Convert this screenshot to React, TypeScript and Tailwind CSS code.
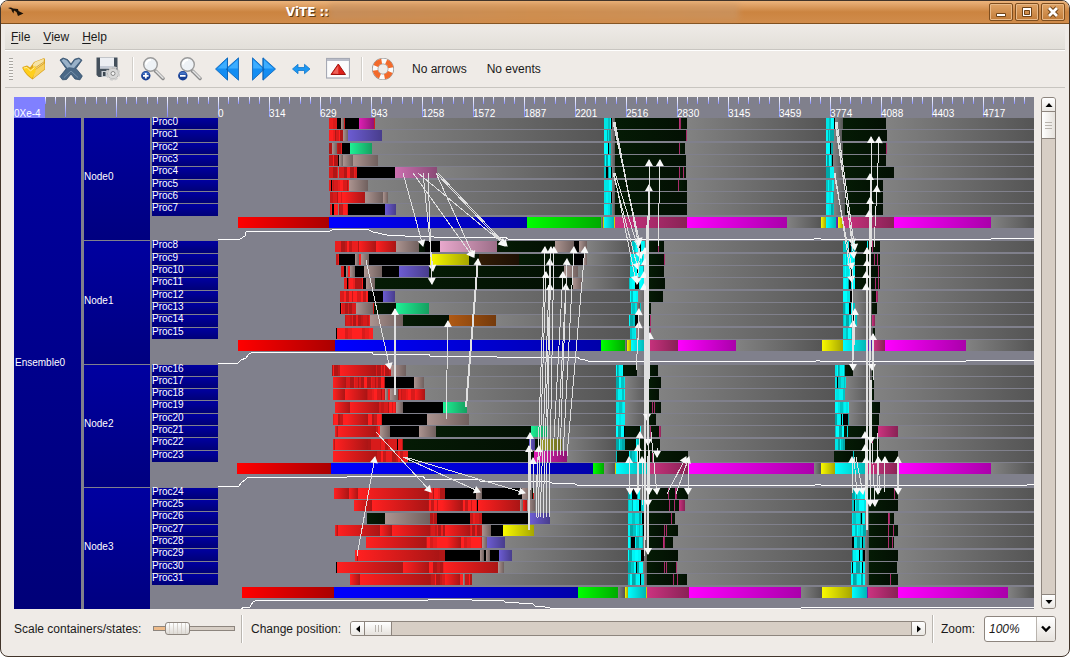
import React from "react";

// Each track is a list of "<x><state>" tokens, a state lasts until the next token.
// "_" is idle; lower case r / c are dense runs of short states.
const NODES = [
  {
    name: "Node0",
    tracks: [
      "329r 337K 341T 344R 345K 359M 374R 375_ 604c 611K 612_ 615D 679V 681D 687_ 826c 834K 835_ 843D 886_",
      "329r 343T 348S 382_ 604c 611_ 615D 686V 687_ 826c 834_ 842D 887_",
      "329r 332T 337r 342K 350G 372_ 604c 608K 609c 611_ 615D 679V 680D 685_ 826c 830K 831c 833_ 843D 886V 887_",
      "329r 338K 339T 343T 353T 378_ 604c 611_ 615D 686_ 826c 832K 833_ 843D 886_",
      "329r 338T 339r 357K 395P 437_ 604c 606K 608c 611K 612_ 615D 679V 680D 683V 684D 686_ 826c 834_ 843D 894_",
      "329r 331K 332r 349T 368_ 604c 612_ 615D 678V 679D 687_ 826c 834_ 845D 883_",
      "330r 344R 365T 383T 388_ 604c 611K 612_ 615D 687_ 826c 834_ 845D 883_",
      "330r 332K 334r 338T 339r 348K 385S 396_ 604c 612_ 615D 687_ 826c 834_ 845D 883_",
    ],
    summary: "238A 329B 527N 601_ 603Y 604C 614Y 615V 687F 787_ 821Y 826C 836U 838Y 843V 894F 991_",
    curve:
      "218,239 240,239 245,236 246,232 249,231 330,231 334,229 367,229 373,232 387,235 405,236 433,236 434,237 505,237 508,239 814,239 815,238 820,238 821,239 991,239 992,238 1030,238 1034,239",
  },
  {
    name: "Node1",
    tracks: [
      "335r 359R 376R 396T 419D 425K 440Q 497D 555T 574K 579T 587_ 632c 639K 641c 645_ 649D 658V 659D 664_ 843c 849K 851c 855D 867c 868D 872V 873D 880_",
      "336r 339K 355T 359r 361T 369K 430Y 469D 479W 519D 573K 584T 587_ 630c 646_ 649D 664V 665_ 843c 855D 874V 875D 877V 878D 880_",
      "341r 344K 346T 348r 350T 355K 364T 382K 399S 429D 564T 578_ 630c 637K 638c 646_ 649D 664_ 843c 850K 852c 855D 878V 879D 880_",
      "344r 347K 348r 363K 366T 375D 573T 582_ 629c 635K 639c 645_ 649D 665_ 843c 849K 851c 855D 875V 876D 878V 879D 880_",
      "340r 368K 383S 395_ 630c 638_ 649D 663_ 843c 850K 853_ 872D 876V 878_",
      "340K 341r 356T 373R 374D 396G 429_ 631c 637_ 640c 641_ 649D 651_ 843c 849K 851c 855_ 872D 877_",
      "345r 370T 403D 449O 496_ 629c 635K 638_ 649D 650V 651_ 843c 852K 854c 857_ 872V 875_",
      "336K 337r 373_ 630c 636_ 650V 651_ 843c 853_ 873D 875_",
    ],
    summary: "238A 335B 601N 625_ 627Y 631C 645_ 647V 678F 736_ 822Y 843C 867U 873V 885F 966_",
    curve:
      "218,363 238,363 241,360 246,358 249,354 253,352 372,352 373,354 429,354 430,356 496,356 497,357 577,357 580,359 585,360 588,361 816,361 817,360 819,360 820,361 966,361 967,360 1031,360 1034,361",
  },
  {
    name: "Node2",
    tracks: [
      "332r 340R 376r 391T 406_ 616c 623D 637_ 649D 658_ 835c 845D 853_ 872D 874_",
      "333R 346r 385K 414T 424_ 616c 625_ 649D 661_ 835c 837K 838c 846_ 872D 874_",
      "333R 345R 367r 385T 388r 390T 398r 415R 425_ 616c 625_ 649D 659_ 835c 845_ 872D 874_",
      "335R 350R 379r 396T 403K 443G 467_ 616c 625_ 649D 652V 653D 654V 655D 661_ 835c 849_ 872D 880_",
      "333r 347R 368r 382K 427T 469_ 616c 625_ 649D 656_ 835c 841K 842c 843K 848c 849_ 872D 879_",
      "335R 338R 376r 380T 390K 419T 436D 531G 547_ 616c 624K 625D 640c 641_ 650V 651D 659V 661_ 835c 844D 847c 848D 878V 898_",
      "333R 335R 368r 397K 398r 403D 529S 535D 541L 562_ 616c 625D 636c 639D 660_ 835c 845D 872V 873D 879_",
      "333R 377r 408D 534M 567_ 616c 617D 629c 637D 652V 653D 688_ 834D 853c 854D 898_",
    ],
    summary: "237A 331B 593N 604_ 615Y 616C 647V 689F 814_ 821Y 835C 867V 899F 991_",
    curve:
      "218,486 239,486 241,483 245,480 248,477 347,477 348,476 423,476 425,479 478,479 480,481 547,481 552,483 575,484 577,485 815,485 816,484 820,484 821,485 1027,485 1028,484 1030,484 1034,485",
  },
  {
    name: "Node3",
    tracks: [
      "334R 349R 358R 429r 445K 476T 482K 522T 532D 533R 534_ 628c 632K 637c 640_ 647D 668V 669D 675V 677D 688_ 852c 867_ 868D 894V 895D 898_",
      "354R 372R 428r 442R 462r 477K 478R 520T 523R 527T 535_ 628c 639K 641c 645_ 647D 669V 670D 674V 675D 679V 685_ 852c 854K 855c 866_ 869D 898_",
      "367D 385T 430r 437K 470r 482K 530S 550_ 628c 642K 644_ 647D 671V 672D 675_ 852c 861K 862c 865_ 869D 888V 890D 894_",
      "335R 338R 380R 392R 430r 445R 470r 482T 491K 503Y 534_ 628c 643K 645_ 647D 664V 665D 666V 667D 678_ 852c 866_ 869D 888V 889D 893V 894D 898_",
      "366R 426r 447R 461r 482T 487S 505_ 628c 631K 635c 643_ 647D 663V 665D 673_ 852K 854c 862K 863c 865_ 869D 888V 889D 892V 893D 894_",
      "355r 358R 439r 445K 480T 484K 486T 490K 499S 512_ 628c 641K 644_ 647D 678_ 852c 859K 860c 863K 865_ 869D 898_",
      "336K 337R 403R 429r 444R 498T 504_ 628c 636K 637c 643_ 647D 664V 665D 666V 667D 676V 677_ 851c 852K 853c 862K 863c 865_ 869D 897_",
      "350R 360R 430r 445R 460r 463T 465r 472_ 628c 640K 641c 644_ 647D 673V 674D 677V 678D 687_ 851c 865_ 869D 890V 891D 898_",
    ],
    summary: "242A 334B 578N 618_ 625Y 628C 646Y 647V 689F 801_ 822Y 852C 867U 868V 898F 1008_",
    curve:
      "241,609 244,607 250,607 253,602 257,600 428,600 429,599 471,599 472,600 503,600 505,602 533,604 535,606 540,606 550,608 801,608 802,607 1030,607 1034,608",
  },
];

const STATES: Record<string, [string, string]> = {
  _: ["#828282", "#555555"],
  A: ["#ff0000", "#aa0000"],
  B: ["#0000ff", "#0000aa"],
  N: ["#00ff00", "#00aa00"],
  Y: ["#fafa00", "#a6a600"],
  C: ["#00ffff", "#00b4b4"],
  F: ["#ff00ff", "#aa00aa"],
  V: ["#cc3380", "#882255"],
  U: ["#6a30c0", "#5020a0"],
  R: ["#ff2020", "#aa1515"],
  K: ["#000000", "#000000"],
  T: ["#ac9490", "#70605e"],
  M: ["#de20b4", "#901575"],
  S: ["#6c5cd2", "#483d8c"],
  G: ["#1ff095", "#159f60"],
  P: ["#cc70b0", "#8a4a76"],
  Q: ["#e8a8cc", "#9c6e88"],
  D: ["#051b05", "#031003"],
  O: ["#b05a14", "#743a0c"],
  W: ["#321c06", "#1e1004"],
  L: ["#9c9c30", "#6c6c20"],
};

const DENSE: Record<string, string[]> = {
  r: ["#ff2020", "#d81b1b", "#b01616", "#ea1e1e", "#c41919"],
  c: ["#00ffff", "#00e4e4", "#00a8a8", "#00f4f4", "#00c4c4"],
};

// from x, from y, to x, to y, stroke width
const ARROWS = [
  [403, 173, 423, 246, 1], [413, 173, 473, 257, 1], [418, 173, 505, 245, 1],
  [423, 173, 433, 271, 1], [428, 173, 432, 284, 1], [436, 173, 474, 257, 1],
  [436, 173, 505, 246, 1], [438, 173, 507, 246, 1],
  [366, 260, 390, 369, 1], [395, 395, 395, 309, 2], [446, 420, 448, 321, 1],
  [466, 407, 478, 259, 2], [357, 556, 375, 457, 1],
  [536, 518, 545, 247, 1], [538, 518, 546, 272, 1], [540, 518, 550, 259, 1],
  [543, 518, 550, 284, 1], [546, 518, 551, 247, 1], [549, 518, 554, 247, 1],
  [553, 456, 563, 272, 1], [557, 456, 566, 284, 1], [560, 456, 567, 259, 1],
  [563, 456, 574, 247, 1], [567, 456, 585, 247, 1],
  [529, 530, 529, 446, 2], [530, 490, 530, 433, 1], [533, 493, 533, 458, 1], [536, 490, 539, 446, 1],
  [376, 432, 431, 492, 1], [403, 457, 480, 492, 1], [405, 457, 525, 493, 1],
  [613, 122, 640, 244, 1], [615, 122, 641, 258, 1], [614, 122, 639, 246, 1],
  [613, 173, 638, 269, 1], [614, 173, 636, 282, 1], [615, 173, 641, 258, 1],
  [645, 540, 645, 248, 2], [645, 500, 645, 259, 1], [644, 556, 644, 272, 1], [646, 500, 644, 284, 1],
  [649, 380, 650, 333, 1], [648, 247, 649, 185, 2], [649, 220, 649, 160, 1], [658, 247, 660, 160, 1],
  [636, 370, 639, 322, 1], [638, 340, 639, 309, 1], [640, 250, 637, 284, 1],
  [647, 225, 647, 420, 3], [648, 300, 648, 445, 2], [648, 456, 648, 554, 2], [648, 440, 648, 506, 1],
  [638, 493, 640, 432, 1], [637, 493, 638, 445, 1], [630, 493, 629, 457, 1], [643, 505, 642, 457, 1],
  [629, 458, 630, 494, 1], [638, 450, 637, 494, 1], [649, 450, 649, 494, 1], [651, 432, 657, 494, 1],
  [657, 448, 657, 457, 1], [688, 458, 688, 494, 1], [667, 494, 686, 457, 1], [676, 494, 689, 457, 1],
  [835, 122, 853, 245, 1], [836, 122, 854, 258, 1], [837, 122, 855, 250, 1],
  [834, 173, 852, 269, 1], [835, 173, 852, 282, 1],
  [871, 247, 871, 137, 1], [877, 190, 879, 137, 1], [870, 247, 870, 174, 1], [874, 247, 877, 186, 1],
  [870, 360, 870, 198, 2], [869, 480, 869, 211, 1], [867, 530, 867, 248, 2], [867, 500, 867, 260, 1],
  [866, 400, 866, 272, 1], [866, 400, 866, 284, 1], [854, 346, 855, 309, 1], [853, 360, 853, 321, 1],
  [852, 270, 853, 370, 1], [872, 340, 872, 370, 1], [871, 380, 871, 443, 2], [873, 380, 873, 334, 1],
  [866, 500, 865, 432, 1], [866, 500, 865, 445, 1], [866, 493, 866, 457, 1], [853, 493, 852, 457, 1],
  [854, 457, 857, 494, 1], [856, 457, 863, 494, 1], [877, 432, 878, 494, 1], [880, 493, 878, 457, 1],
  [884, 493, 885, 457, 1], [897, 490, 898, 457, 1], [898, 458, 898, 494, 1],
  [870, 443, 870, 506, 1], [872, 443, 875, 506, 1],
];

const RULER = [
  "", "", "", "", "0", "314", "629", "943", "1258", "1572",
  "1887", "2201", "2516", "2830", "3145", "3459", "3774", "4088", "4403", "4717",
];

const TOP = 118;
const END = 1034;
const rowTop = (row: number) => Math.round(TOP + row * 12.33);

function Track({ states, row }: { states: string; row: number }) {
  const tokens = states.split(" ").map((t) => ({ x: parseInt(t, 10), key: t[t.length - 1] }));
  const y = rowTop(row);
  const h = 11;

  return (
    <g>
      {tokens.map(({ x, key }, i) => {
        const next = tokens[i + 1]?.x ?? END;
        const shades = DENSE[key];
        if (!shades) {
          return <rect key={x} x={x} y={y} width={next - x} height={h} fill={`url(#state${key})`} />;
        }
        const slices = [];
        let at = x;
        while (at < next) {
          const n = (at * 37 + row * 53 + at * at) % 17;
          const w = Math.min(key === "c" ? 1 + (n % 3) : 1 + (n % 4), next - at);
          slices.push(<rect key={at} x={at} y={y} width={w} height={h} fill={shades[n % shades.length]} />);
          at += w;
        }
        return <g key={x}>{slices}</g>;
      })}
    </g>
  );
}

function Arrow({ points }: { points: number[] }) {
  const [x1, y1, x2, y2, width] = points;
  const angle = (Math.atan2(y2 - y1, x2 - x1) * 180) / Math.PI;
  return (
    <g>
      <line x1={x1} y1={y1} x2={x2} y2={y2} stroke="#e0e0e0" strokeWidth={width} shapeRendering="crispEdges" />
      <path d="M1 0L-6 -4V4Z" fill="#f8f8f8" transform={`translate(${x2} ${y2}) rotate(${angle})`} />
    </g>
  );
}

function Timeline() {
  return (
    <svg
      className="h-[493px] min-w-0 flex-1"
      viewBox="218 118 816 493"
      preserveAspectRatio="none"
      role="img"
      aria-label="Trace timeline"
    >
      <defs>
        {Object.entries(STATES).map(([key, [from, to]]) => (
          <linearGradient key={key} id={`state${key}`}>
            <stop offset="0" stopColor={from} />
            <stop offset="1" stopColor={to} />
          </linearGradient>
        ))}
      </defs>
      <g shapeRendering="crispEdges">
        {NODES.map((node, n) => (
          <g key={node.name}>
            {node.tracks.map((states, i) => (
              <Track key={i} states={states} row={n * 10 + i} />
            ))}
            <Track states={node.summary} row={n * 10 + 8} />
            <polyline points={node.curve} fill="none" stroke="#fff" strokeWidth="1" />
          </g>
        ))}
      </g>
      {ARROWS.map((points, i) => (
        <Arrow key={i} points={points} />
      ))}
    </svg>
  );
}

function Ruler() {
  return (
    <div className="grid h-[21px] shrink-0 grid-cols-20">
      {RULER.map((label, i) => (
        <div key={i} className="grid">
          <div className="flex [grid-area:1/1]">
            {[0, 1, 2, 3, 4].map((tick) => (
              <div key={tick} className="flex-1">
                <div
                  className={
                    tick === 0
                      ? "h-5 w-px bg-linear-to-b from-white to-[#8080ff]"
                      : "h-[7px] w-px bg-linear-to-b from-white to-[#8080ff]"
                  }
                />
              </div>
            ))}
          </div>
          {i === 0 ? (
            <span className="flex w-[31px] items-end bg-[#8080ff] leading-[8px] [grid-area:1/1]">0Xe-4</span>
          ) : (
            <span className="self-end leading-[8px] [grid-area:1/1]">{label}</span>
          )}
        </div>
      ))}
    </div>
  );
}

function ContainerTree() {
  return (
    <div className="flex h-[493px] w-[204px] shrink-0">
      <div className="mr-[3px] flex w-[67px] items-center bg-linear-to-b from-[#0000a0] to-[#000078] pb-1 pl-px">
        Ensemble0
      </div>
      <div className="flex flex-1 flex-col">
        {NODES.map((node, n) => (
          <div key={node.name} className="flex flex-1 gap-[2px]">
            <div className="mb-px flex w-[66px] items-center bg-linear-to-b from-[#0000a0] to-[#000080] pb-1">
              {node.name}
            </div>
            <div className="grid flex-1 grid-rows-10">
              {node.tracks.map((_, i) => (
                <div key={i} className="mb-px bg-linear-to-b from-[#0000a0] to-[#000078] leading-[7px]">
                  Proc{n * 8 + i}
                </div>
              ))}
            </div>
          </div>
        ))}
      </div>
    </div>
  );
}

function ToolButton({ label, children }: { label: string; children: React.ReactNode }) {
  return (
    <button type="button" aria-label={label} className="flex h-9 w-[37px] items-center justify-center">
      <svg viewBox="0 0 24 24" className="size-6">
        {children}
      </svg>
    </button>
  );
}

function Magnifier({ sign }: { sign: string }) {
  return (
    <>
      <path d="M14.5 14L22 21.5" stroke="#8b8b8b" strokeWidth="3.4" strokeLinecap="round" />
      <path d="M15 14L22 21" stroke="#e4e4e4" strokeWidth="1.6" strokeLinecap="round" />
      <circle cx="9.5" cy="7.5" r="6.8" fill="#eef2f6" stroke="#9a9a9a" strokeWidth="1.4" />
      <path d="M5 7.5A4.6 4.6 0 0 1 10 3" stroke="#fff" strokeWidth="2" fill="none" />
      <circle cx="4.8" cy="18.8" r="4.7" fill="#173f94" />
      <path d="M0.8 17.4a4.3 4.3 0 0 1 8 0Z" fill="#4473c4" />
      <path d={sign} stroke="#fff" strokeWidth="1.8" />
    </>
  );
}

function Separator() {
  return <div className="h-6 w-[2px] border-l border-[#d2cfca] bg-white" />;
}

function Toolbar() {
  return (
    <div className="flex h-[38px] shrink-0 items-center border-b border-[#c8c5c0] pl-1">
      <div className="mr-[2px] h-[22px] w-1 bg-[repeating-linear-gradient(to_bottom,#aaa7a2_0_1px,#f6f4f1_1px_3px)]" />
      <ToolButton label="Open">
        <path d="M0.5 10L5 8.5L8 10.5L12 5L21.5 1.2Q23 1 23 2.5V12.5L10.5 22.5Q4 18.5 0.5 11.5Z" fill="#dba31c" />
        <path d="M11 7.5L13 5L21.8 1.8V6L12 13Z" fill="#f5e3a6" />
        <path d="M12.5 13.5L22.5 6.5V12L11 21.5Z" fill="#f7d060" />
        <path d="M13 11L22.5 4.5" stroke="#d9a83c" strokeWidth="1" />
        <path d="M1.2 10.5L5 9.5L8.5 12.5L13.5 8.5V15L10 21.3Q4.5 17.5 1.2 11.8Z" fill="#ffcf1c" />
        <path d="M2 11L5 10.5L8.5 14L12.5 10.5" stroke="#fff0a0" fill="none" />
      </ToolButton>
      <ToolButton label="Close trace">
        <path
          d="M1 3L4 1L8.5 2.5L12 7L15.5 2.2L20 1L23 3.2L17 11.5L23.3 19L21 22.8L16 22L12 17L7.5 22.5L3.5 22.8L1 19.5L7.2 11.8Z"
          fill="#4a6886"
          stroke="#304d69"
          strokeWidth="0.8"
        />
        <path d="M2.5 3.5L4.5 2L8 3.5L12 8.8L16 3.2L20 2L21.5 3.5L15 11Q9 9.5 8.5 11Z" fill="#9ab2c9" />
        <path d="M5 20.5L12 14L19 20.5" stroke="#7590aa" fill="none" />
      </ToolButton>
      <ToolButton label="Export">
        <path d="M0.5 0.5H21.5V20H2.5L0.5 18Z" fill="#44505c" />
        <rect x="4" y="0.5" width="14" height="11" fill="#eceef2" />
        <path d="M4 9H18V11.5H4Z" fill="#c5cbd6" />
        <rect x="5.5" y="14" width="9" height="6" fill="#c9ced4" />
        <rect x="7" y="15" width="2.5" height="4" fill="#3b4650" />
        <circle cx="17" cy="16.5" r="5.5" fill="#d8d8d8" stroke="#b0b0b0" />
        <circle cx="17" cy="16.5" r="6.2" fill="none" stroke="#cecece" strokeWidth="2" strokeDasharray="3 1.87" />
        <circle cx="17" cy="16.5" r="2" fill="#f6f6f6" stroke="#888" />
      </ToolButton>
      <div className="ml-[6px] -mr-[2px] flex w-1">
        <Separator />
      </div>
      <ToolButton label="Zoom in">
        <Magnifier sign="M2 18.8H7.6M4.8 16V21.6" />
      </ToolButton>
      <ToolButton label="Zoom out">
        <Magnifier sign="M2 18.8H7.6" />
      </ToolButton>
      <ToolButton label="Previous">
        <path d="M0.5 12L12.5 0.8V23.2ZM11 12L23.5 0.8V23.2Z" fill="#138df2" stroke="#0a62b5" strokeWidth="0.8" />
        <path d="M2.5 11.5L11.8 2.8V11.5ZM13 11.5L22.8 2.8V11.5Z" fill="#3dadff" />
        <path d="M12.5 1V23" stroke="#0a62b5" strokeWidth="0.8" />
      </ToolButton>
      <ToolButton label="Next">
        <path d="M0.5 0.8L12.5 12L0.5 23.2ZM11 0.8L23.5 12L11 23.2Z" fill="#138df2" stroke="#0a62b5" strokeWidth="0.8" />
        <path d="M1.2 2.8L10.5 11.5H1.2ZM11.8 2.8L21.5 11.5H11.8Z" fill="#3dadff" />
        <path d="M11 1V23" stroke="#0a62b5" strokeWidth="0.8" />
      </ToolButton>
      <ToolButton label="Show whole trace">
        <path
          d="M3.5 12L9 7.3V10.5H15.5V7.3L21 12L15.5 16.7V13.5H9V16.7Z"
          fill="#1c97f2"
          stroke="#1277cc"
          strokeWidth="0.8"
        />
      </ToolButton>
      <ToolButton label="Go to top">
        <rect x="0.5" y="1.5" width="23" height="19.5" fill="#fbfbfc" stroke="#a6a9b4" strokeWidth="1.2" />
        <path d="M1 2H23V4H1Z" fill="#b9bcc8" />
        <path d="M12.3 7L19.5 17.5H5Z" fill="#dc1f19" stroke="#a11410" />
        <path d="M12.3 8.5V17L6.5 16.5Z" fill="#ee6058" />
      </ToolButton>
      <div className="ml-[5px] -mr-[1px] flex w-1">
        <Separator />
      </div>
      <ToolButton label="Help">
        <circle cx="12" cy="12" r="7.9" fill="none" stroke="#8c8c8c" strokeWidth="6.2" />
        <circle cx="12" cy="12" r="7.9" fill="none" stroke="#fafafa" strokeWidth="5" />
        <circle
          cx="12"
          cy="12"
          r="7.9"
          fill="none"
          stroke="#f26a2b"
          strokeWidth="5"
          strokeDasharray="7.8 4.609"
          transform="rotate(22 12 12)"
        />
      </ToolButton>
      <span className="ml-[11px]">No arrows</span>
      <span className="ml-5">No events</span>
    </div>
  );
}

const stepper = "flex shrink-0 items-center justify-center border-[#8d857e] bg-linear-to-b from-white to-[#ebe8e4]";

function Stepper({ label, d, className }: { label: string; d: string; className: string }) {
  return (
    <button type="button" aria-label={label} className={`${stepper} ${className}`}>
      <svg viewBox="0 0 8 8" className="size-2">
        <path d={d} fill="#000" />
      </svg>
    </button>
  );
}

function VerticalScrollbar() {
  return (
    <div className="flex w-[15px] flex-col rounded-[3px] border border-[#8d857e] bg-[#d7cec5]">
      <Stepper label="Scroll up" d="M4 2L7.5 6H0.5Z" className="h-[14px] rounded-t-[2px] border-b" />
      <div className="flex h-[27px] flex-col items-center justify-center gap-[2px] border-b border-[#8d857e] bg-linear-to-r from-white to-[#e6e2dd]">
        <div className="h-px w-[7px] bg-[#b9b4ae]" />
        <div className="h-px w-[7px] bg-[#b9b4ae]" />
        <div className="h-px w-[7px] bg-[#b9b4ae]" />
      </div>
      <Stepper label="Scroll down" d="M4 6L7.5 2H0.5Z" className="mt-auto h-[14px] rounded-b-[2px] border-t" />
    </div>
  );
}

function HorizontalScrollbar() {
  return (
    <div className="flex h-[15px] flex-1 rounded-[3px] border border-[#8d857e] bg-[#d7cec5]" aria-labelledby="position" role="group">
      <Stepper label="Scroll left" d="M2 4L6 0.5V7.5Z" className="w-[14px] rounded-l-[2px] border-r" />
      <div className="flex w-[27px] items-center justify-center gap-[2px] border-r border-[#8d857e] bg-linear-to-b from-white to-[#e6e2dd]">
        <div className="h-[7px] w-px bg-[#b9b4ae]" />
        <div className="h-[7px] w-px bg-[#b9b4ae]" />
        <div className="h-[7px] w-px bg-[#b9b4ae]" />
      </div>
      <Stepper label="Scroll right" d="M6 4L2 0.5V7.5Z" className="ml-auto w-[14px] rounded-r-[2px] border-l" />
    </div>
  );
}

function WindowButton({ label, children }: { label: string; children: React.ReactNode }) {
  return (
    <button
      type="button"
      aria-label={label}
      className="flex h-[18px] w-6 items-center justify-center rounded-[2px] border border-[#7d4d1e] bg-linear-to-b from-[#dfa365] to-[#c27c38] shadow-[inset_0_0_0_1px_#e8b988]"
    >
      <svg viewBox="0 0 12 12" className="size-3">
        {children}
      </svg>
    </button>
  );
}

function TitleBar() {
  return (
    <header className="flex h-[23px] shrink-0 items-center border-b border-[#80501f] bg-linear-to-b from-[#ecb47c] via-[#cb8440] to-[#d18c4b] pr-1 pl-[7px]">
      <svg viewBox="0 0 16 10" className="h-[10px] w-4">
        <path d="M0 1Q3 0 5 1.5L10 2L10.5 4L15.5 6.5L10 9L8.5 5L6 3.5L5.5 6.5L3.8 4L3.5 2.5Z" fill="#1a1209" />
      </svg>
      <div className="flex min-w-0 flex-1 items-center justify-center pl-3">
        <h1 className="font-['DejaVu_Sans',sans-serif] text-xs font-bold whitespace-pre text-white [text-shadow:1px_1px_0_#5c3a17]">
          ViTE ::
        </h1>
        <div className="h-4 w-[410px] bg-linear-to-r from-[#c2936a] via-[#cf9459] to-[#c9986a] opacity-60 blur-[3px]" />
      </div>
      <div className="flex gap-[2px]">
        <WindowButton label="Minimize">
          <path d="M1.5 7.5H10.5V10.5H1.5Z" fill="#fff" stroke="#6e4317" />
        </WindowButton>
        <WindowButton label="Maximize">
          <path d="M1.5 1.5H10.5V10.5H1.5ZM3.5 4.5V8.5H8.5V4.5Z" fill="#fff" fillRule="evenodd" stroke="#6e4317" />
        </WindowButton>
        <WindowButton label="Close">
          <path d="M2 2L10 10M10 2L2 10" stroke="#6e4317" strokeWidth="4.6" />
          <path d="M2 2L10 10M10 2L2 10" stroke="#fff" strokeWidth="2.8" />
        </WindowButton>
      </div>
    </header>
  );
}

export default function App() {
  return (
    <div className="flex h-screen flex-col overflow-hidden rounded-lg border border-[#41342a] bg-[#efebe7] font-['Liberation_Sans',sans-serif] text-xs text-[#1a1a1a]">
      <TitleBar />
      <div className="flex min-h-0 flex-1 flex-col px-1">
        <nav className="flex h-[26px] shrink-0 items-center gap-[13px] border-b border-[#c8c5c0] bg-linear-to-b from-[#efebe7] to-[#e2dfd9] pl-[6px] shadow-[0_1px_0_#fff]">
          <button type="button">
            <span className="underline underline-offset-2">F</span>ile
          </button>
          <button type="button">
            <span className="underline underline-offset-2">V</span>iew
          </button>
          <button type="button">
            <span className="underline underline-offset-2">H</span>elp
          </button>
        </nav>
        <Toolbar />
        <main className="flex min-h-0 flex-1 gap-[7px] pt-[9px] pr-[9px] pl-[9px]">
          <div className="flex min-w-0 flex-1 flex-col overflow-hidden bg-[#80808c] text-[10px] text-white">
            <Ruler />
            <div className="flex">
              <ContainerTree />
              <Timeline />
            </div>
          </div>
          <VerticalScrollbar />
        </main>
        <footer className="flex h-[47px] shrink-0 items-center px-[9px] pb-2">
          <label htmlFor="scale" className="w-[139px]">
            Scale containers/states:
          </label>
          <input
            id="scale"
            type="range"
            defaultValue={20}
            className="h-[13px] w-[82px] appearance-none bg-transparent [&::-webkit-slider-runnable-track]:h-[5px] [&::-webkit-slider-runnable-track]:border [&::-webkit-slider-runnable-track]:border-[#8d857e] [&::-webkit-slider-runnable-track]:bg-[linear-gradient(to_right,#eebb8a_20%,#d7cec5_20%)] [&::-webkit-slider-thumb]:-mt-[5px] [&::-webkit-slider-thumb]:h-[13px] [&::-webkit-slider-thumb]:w-[25px] [&::-webkit-slider-thumb]:appearance-none [&::-webkit-slider-thumb]:rounded-[3px] [&::-webkit-slider-thumb]:border [&::-webkit-slider-thumb]:border-[#8d857e] [&::-webkit-slider-thumb]:bg-[repeating-linear-gradient(to_right,transparent_0_3px,#d6d1cb_3px_4px),linear-gradient(#fff,#dedad5)]"
          />
          <div className="mr-2 ml-[6px] h-7 w-[2px] border-l border-[#bab6b0] bg-white" />
          <span id="position" className="w-[99px]">
            Change position:
          </span>
          <HorizontalScrollbar />
          <div className="mr-[7px] ml-[6px] h-7 w-[2px] border-l border-[#bab6b0] bg-white" />
          <label htmlFor="zoom" className="w-[43px]">
            Zoom:
          </label>
          <div className="grid w-[72px] rounded-[3px] border border-[#8d857e] bg-white">
            <select
              id="zoom"
              defaultValue="100%"
              className="h-6 w-full appearance-none bg-transparent pl-1 italic [grid-area:1/1]"
            >
              <option>100%</option>
            </select>
            <div className="pointer-events-none flex w-[19px] items-center justify-center justify-self-end rounded-r-[2px] border-l border-[#b9b4ae] bg-linear-to-b from-white to-[#e6e2dd] [grid-area:1/1]">
              <svg viewBox="0 0 10 8" className="h-2 w-[10px]">
                <path d="M1 1.5L5 5.5L9 1.5" stroke="#000" strokeWidth="2.4" fill="none" />
              </svg>
            </div>
          </div>
        </footer>
      </div>
    </div>
  );
}
